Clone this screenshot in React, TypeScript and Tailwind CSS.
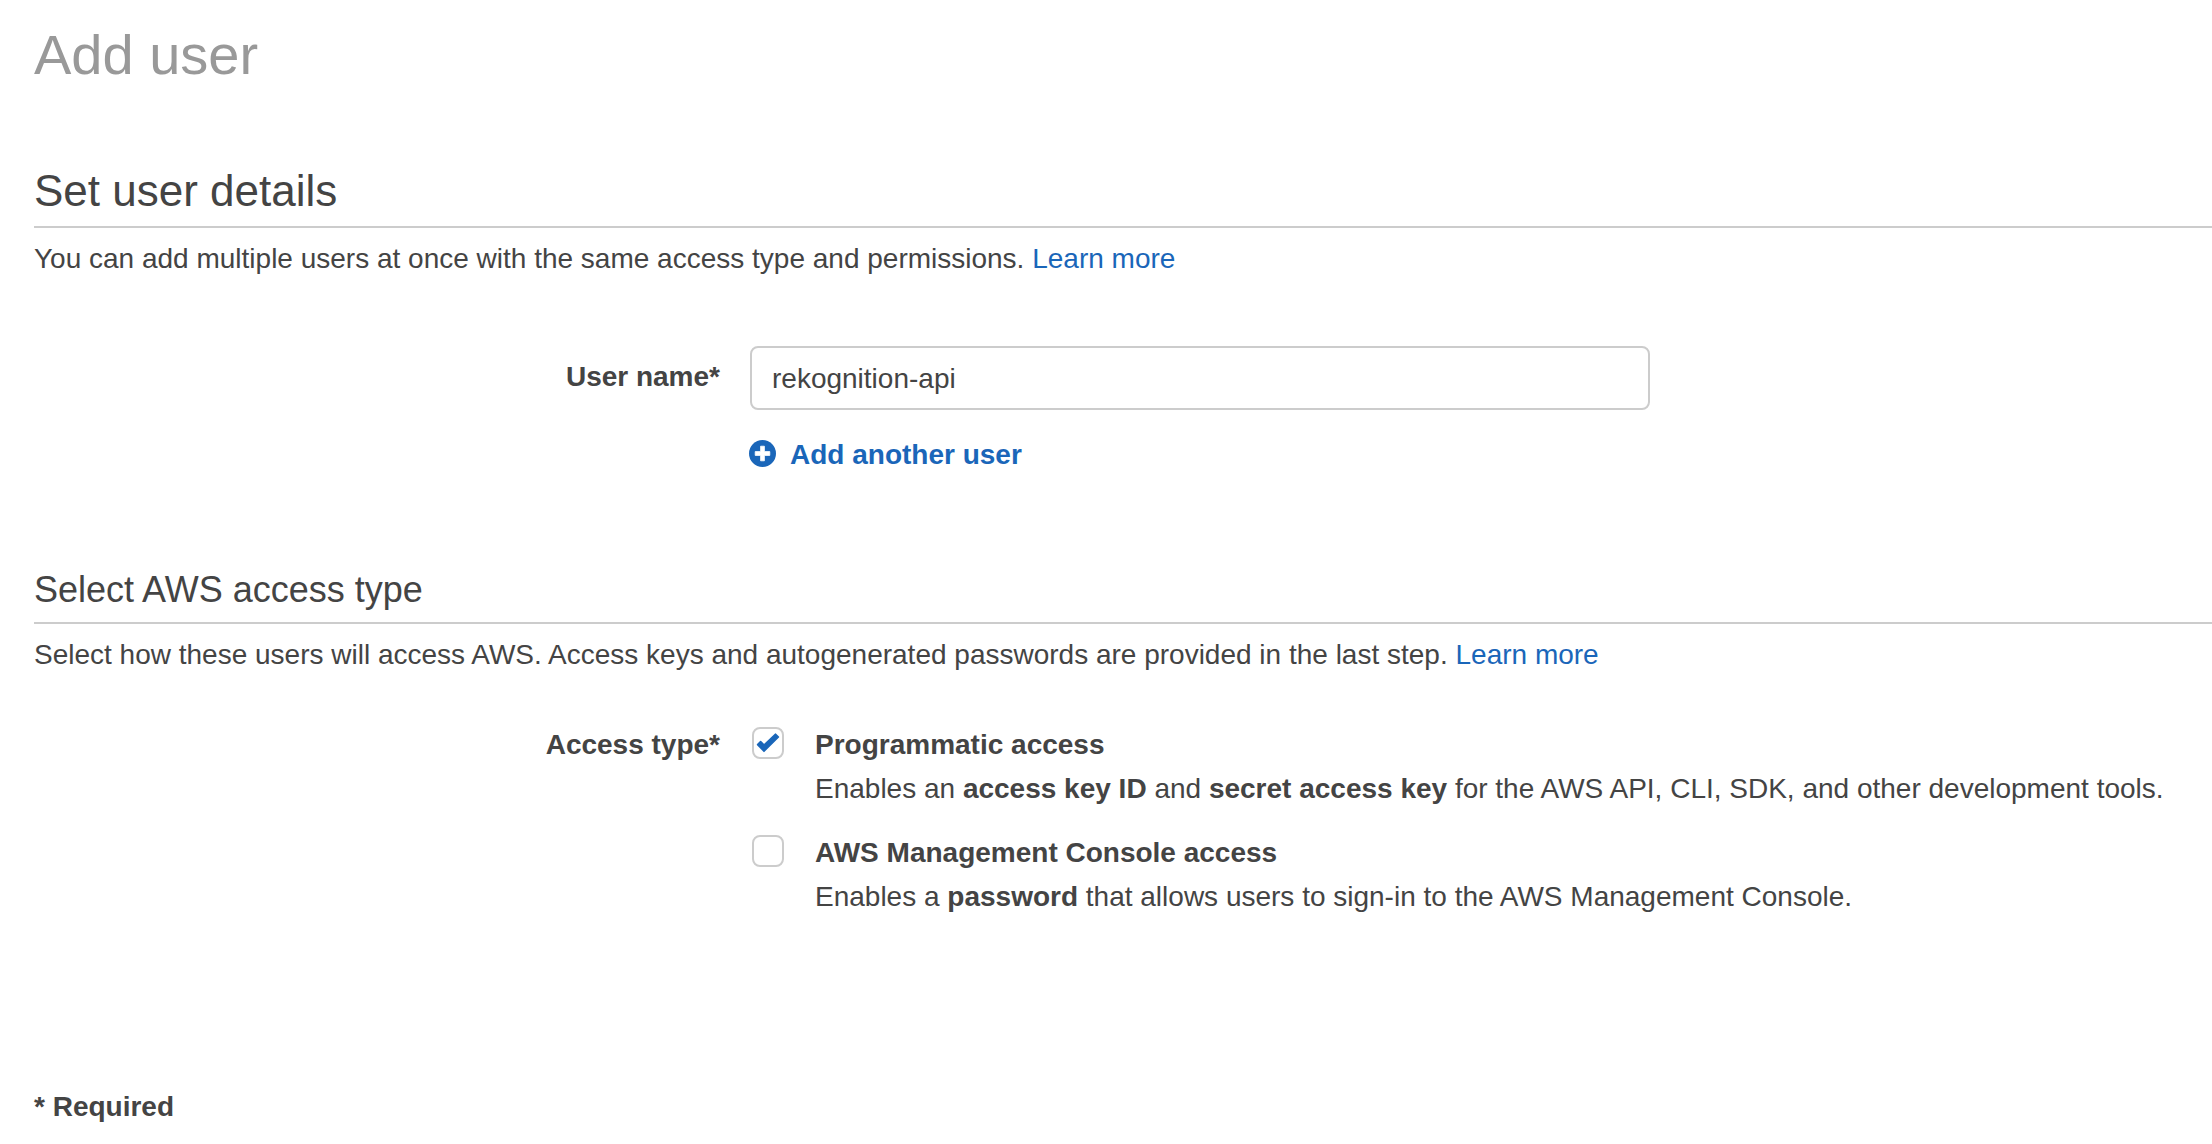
import { useState } from "react";
import type { ReactNode } from "react";

function LearnMore() {
  return (
    <a href="#learn-more" className="text-[#1a66b9] hover:underline">
      Learn more
    </a>
  );
}

function PlusIcon() {
  return (
    <svg viewBox="0 0 27 27" className="-mt-1 -ml-px size-[27px] shrink-0" aria-hidden="true">
      <circle cx="13.5" cy="13.5" r="13.5" fill="#1a66b9" />
      <path
        d="M11.6 6.2h3.8v5.4h5.4v3.8h-5.4v5.4h-3.8v-5.4h-5.4v-3.8h5.4z"
        fill="#fff"
        stroke="#fff"
        strokeWidth="0.8"
        strokeLinejoin="round"
      />
    </svg>
  );
}

type OptionProps = {
  id: string;
  title: string;
  initial?: boolean;
  children: ReactNode;
};

function AccessOption({ id, title, initial = false, children }: OptionProps) {
  const [checked, setChecked] = useState(initial);
  return (
    <div className="flex items-start">
      <span className="mt-1 mr-[31px] ml-0.5 grid size-8 shrink-0">
        <input
          id={id}
          type="checkbox"
          checked={checked}
          onChange={(e) => setChecked(e.target.checked)}
          aria-describedby={`${id}-help`}
          className="col-start-1 row-start-1 size-8 appearance-none rounded-lg border-2 border-[#cccccc] bg-white"
        />
        {checked && (
          <svg
            viewBox="0 0 32 32"
            className="pointer-events-none col-start-1 row-start-1 size-8"
            aria-hidden="true"
          >
            <path
              d="M12 24.3 5.6 17.6 8.6 14.6 12 18 23.6 7.2 26.4 10Z"
              fill="#1a66b9"
              stroke="#1a66b9"
              strokeWidth="1.6"
              strokeLinejoin="round"
            />
          </svg>
        )}
      </span>
      <div>
        <label htmlFor={id} className="block font-bold">
          {title}
        </label>
        <p id={`${id}-help`}>{children}</p>
      </div>
    </div>
  );
}

export default function App() {
  const [name, setName] = useState("rekognition-api");
  return (
    <main className="min-h-screen bg-white pt-[23px] pb-4 pl-[34px] font-['Helvetica_Neue','Liberation_Sans',Arial,sans-serif] text-[28px] leading-10 text-[#444444]">
      <h1 className="text-[56px] leading-16 text-[#999999]">Add user</h1>

      <section className="mt-[78px]">
        <h2 className="border-b-2 border-[#cccccc] pb-[9px] text-[44px] leading-[52px]">
          Set user details
        </h2>
        <p className="mt-[11px]">
          You can add multiple users at once with the same access type and permissions. <LearnMore />
        </p>
        <div className="mt-[67px] flex items-start">
          <label htmlFor="user-name" className="mt-[11px] w-[716px] shrink-0 pr-[30px] text-right font-bold">
            User name*
          </label>
          <div className="w-full max-w-[900px]">
            <input
              id="user-name"
              type="text"
              value={name}
              onChange={(e) => setName(e.target.value)}
              className="block h-16 w-full rounded-lg border-2 border-[#cccccc] bg-white px-5 pt-0.5 outline-none"
            />
            <button type="button" className="mt-[25px] flex items-center gap-[14px] font-bold text-[#1a66b9]">
              <PlusIcon />
              Add another user
            </button>
          </div>
        </div>
      </section>

      <section className="mt-[93px]">
        <h2 className="border-b-2 border-[#cccccc] pb-2.5 text-[36px] leading-11">Select AWS access type</h2>
        <p className="mt-[11px]">
          Select how these users will access AWS. Access keys and autogenerated passwords are provided in
          the last step. <LearnMore />
        </p>
        <div
          role="group"
          aria-labelledby="access-type"
          className="mt-12 flex items-start leading-11"
        >
          <span id="access-type" className="w-[716px] shrink-0 pr-[30px] text-right font-bold">
            Access type*
          </span>
          <div className="flex flex-col gap-5">
            <AccessOption id="programmatic" title="Programmatic access" initial>
              Enables an <strong>access key ID</strong> and <strong>secret access key</strong> for the AWS
              API, CLI, SDK, and other development tools.
            </AccessOption>
            <AccessOption id="console" title="AWS Management Console access">
              Enables a <strong>password</strong> that allows users to sign-in to the AWS Management
              Console.
            </AccessOption>
          </div>
        </div>
      </section>

      <p className="mt-[168px] font-bold">* Required</p>
    </main>
  );
}
